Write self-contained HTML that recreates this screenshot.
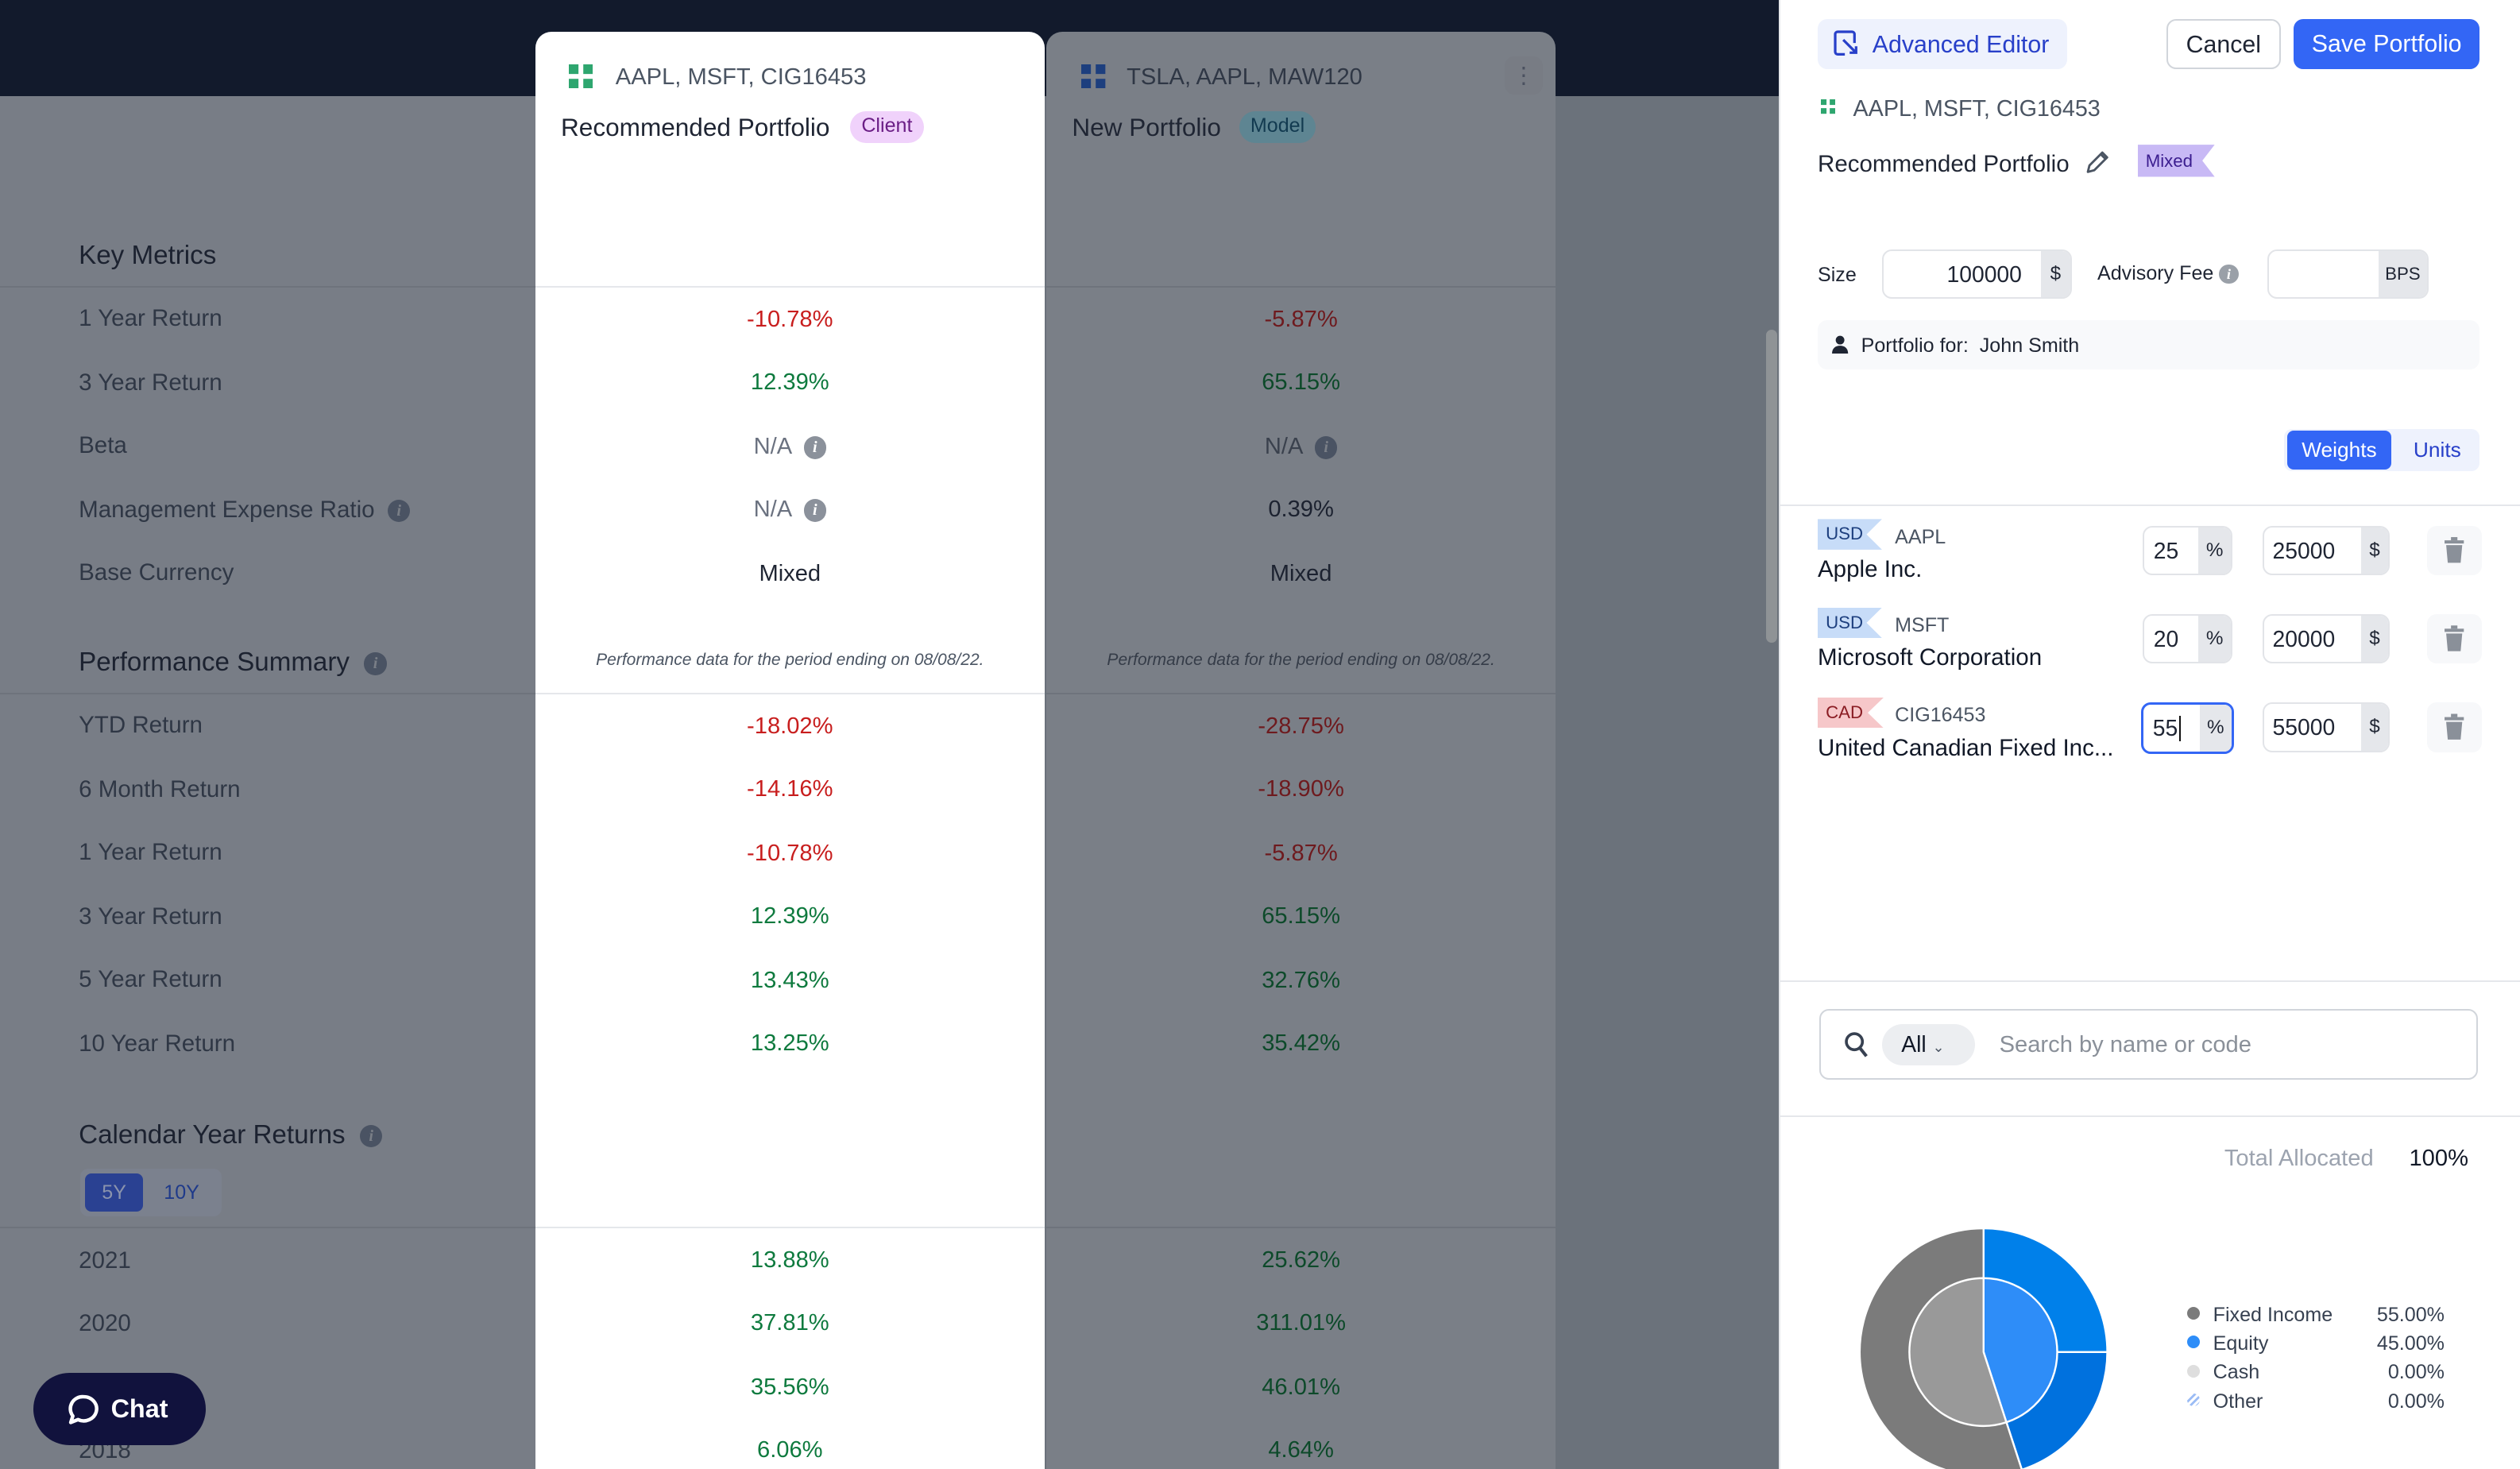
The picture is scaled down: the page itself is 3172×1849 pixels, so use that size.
<!DOCTYPE html>
<html><head><meta charset="utf-8"><style>
*{box-sizing:border-box;margin:0;padding:0}
html,body{width:3172px;height:1848px;overflow:hidden;background:#fff}
#w{position:absolute;left:0;top:0;width:1568px;height:914px;zoom:2.023;font-family:"Liberation Sans",sans-serif;overflow:hidden;background:#6b727b}
.a{position:absolute;white-space:nowrap}
.lab{font-size:14.6px;color:#2f3745}
.h{font-size:16.4px;color:#1c2230}
.c{text-align:center;font-size:14.4px}
.r1{color:#c81e1e}.g1{color:#0e7a3e}
.r2{color:#6e1a1e}.g2{color:#0d4a2a}
.info{display:inline-block;width:14px;height:14px;border-radius:50%;background:#4a5363;color:#7a7f87;font:italic bold 10px/14px "Liberation Serif",serif;text-align:center;vertical-align:middle}
.hl{position:absolute;height:1px}
.inp{position:absolute;border:1px solid #e2e4e8;border-radius:6px;background:#fff;overflow:hidden;font-size:14px;color:#1f2533}
.inp .s{position:absolute;right:0;top:0;bottom:0;background:#e5e7eb;text-align:center;font-size:12px;color:#1f2533}
.tag{position:absolute;height:19px;font-size:11px;padding:3px 0 0 5px}
.trash{position:absolute;width:34px;height:31px;border-radius:6px;background:#f7f8fa}
</style></head><body><div id="w">
<div class="a" style="left:0;top:0;width:1107px;height:60px;background:#121a2c"></div>
<div class="a" style="left:0;top:60px;width:333px;height:854px;background:#787d86"></div>
<div class="a" style="left:651px;top:20px;width:317px;height:894px;background:#7a7f87;border-radius:10px 10px 0 0"></div>
<div class="a" style="left:333px;top:20px;width:317px;height:894px;background:#fff;border-radius:10px 10px 0 0"></div>
<div class="a" style="left:1099px;top:205px;width:7px;height:195px;border-radius:4px;background:#8f9396"></div>

<div class="hl" style="left:0;top:178px;width:333px;background:#6e737c"></div>
<div class="hl" style="left:333px;top:178px;width:317px;background:#e5e7eb"></div>
<div class="hl" style="left:651px;top:178px;width:317px;background:#6e737c"></div>
<div class="hl" style="left:0;top:431px;width:333px;background:#6e737c"></div>
<div class="hl" style="left:333px;top:431px;width:317px;background:#e5e7eb"></div>
<div class="hl" style="left:651px;top:431px;width:317px;background:#6e737c"></div>
<div class="hl" style="left:0;top:763px;width:333px;background:#6e737c"></div>
<div class="hl" style="left:333px;top:763px;width:317px;background:#e5e7eb"></div>
<div class="hl" style="left:651px;top:763px;width:317px;background:#6e737c"></div>

<svg class="a" style="left:354px;top:40px" width="15" height="15"><rect x="0" y="0" width="6" height="6" fill="#2ea66f"/><rect x="9" y="0" width="6" height="6" fill="#2ea66f"/><rect x="0" y="9" width="6" height="6" fill="#2ea66f"/><rect x="9" y="9" width="6" height="6" fill="#2ea66f"/></svg>
<div class="a" style="left:383px;top:40px;font-size:14.4px;color:#4b5563">AAPL, MSFT, CIG16453</div>
<div class="a" style="left:349px;top:70px;font-size:15.6px;color:#1f2533">Recommended Portfolio</div>
<div class="a" style="left:529px;top:69px;height:20px;padding:2px 7px;border-radius:10px;background:#f0d2fb;color:#6b1e86;font-size:12.4px">Client</div>
<svg class="a" style="left:673px;top:40px" width="15" height="15"><rect x="0" y="0" width="6" height="6" fill="#1d3f7e"/><rect x="9" y="0" width="6" height="6" fill="#1d3f7e"/><rect x="0" y="9" width="6" height="6" fill="#1d3f7e"/><rect x="9" y="9" width="6" height="6" fill="#1d3f7e"/></svg>
<div class="a" style="left:701px;top:40px;font-size:14.4px;color:#2f3745">TSLA, AAPL, MAW120</div>
<div class="a" style="left:936px;top:35px;width:24px;height:24px;border-radius:6px;background:#787c84;color:#4b5160;text-align:center;font-size:14px;line-height:24px">&#8942;</div>
<div class="a" style="left:667px;top:70px;font-size:15.6px;color:#1f2533">New Portfolio</div>
<div class="a" style="left:771px;top:69px;height:20px;padding:2px 7px;border-radius:10px;background:#5e8592;color:#123a50;font-size:12.4px">Model</div>

<div class="a h" style="left:49px;top:150px">Key Metrics</div>
<div class="a lab" style="left:49px;top:190px">1 Year Return</div>
<div class="a lab" style="left:49px;top:230px">3 Year Return</div>
<div class="a lab" style="left:49px;top:269px">Beta</div>
<div class="a lab" style="left:49px;top:309px">Management Expense Ratio &nbsp;<span class="info">i</span></div>
<div class="a lab" style="left:49px;top:348px">Base Currency</div>
<div class="a h" style="left:49px;top:403px">Performance Summary &nbsp;<span class="info">i</span></div>
<div class="a lab" style="left:49px;top:443px">YTD Return</div>
<div class="a lab" style="left:49px;top:483px">6 Month Return</div>
<div class="a lab" style="left:49px;top:522px">1 Year Return</div>
<div class="a lab" style="left:49px;top:562px">3 Year Return</div>
<div class="a lab" style="left:49px;top:601px">5 Year Return</div>
<div class="a lab" style="left:49px;top:641px">10 Year Return</div>
<div class="a h" style="left:49px;top:697px">Calendar Year Returns &nbsp;<span class="info">i</span></div>
<div class="a" style="left:50px;top:727px;width:88px;height:30px;border-radius:5px;background:#7b818e"></div>
<div class="a" style="left:53px;top:730px;width:36px;height:24px;border-radius:4px;background:#2a4192;color:#8a93ad;font-size:12.4px;text-align:center;line-height:24px">5Y</div>
<div class="a" style="left:96px;top:730px;width:34px;height:24px;color:#1f3a8a;font-size:12.4px;text-align:center;line-height:24px">10Y</div>
<div class="a lab" style="left:49px;top:776px">2021</div>
<div class="a lab" style="left:49px;top:815px">2020</div>
<div class="a lab" style="left:49px;top:894px">2018</div>

<div class="a" style="left:333px;top:0;width:317px">
<div class="a c r1" style="left:0;width:317px;top:191px">-10.78%</div>
<div class="a c g1" style="left:0;width:317px;top:230px">12.39%</div>
<div class="a c" style="left:0;width:317px;top:270px;color:#6b7280">N/A &nbsp;<span class="info" style="background:#8b919b;color:#fff">i</span></div>
<div class="a c" style="left:0;width:317px;top:309px;color:#6b7280">N/A &nbsp;<span class="info" style="background:#8b919b;color:#fff">i</span></div>
<div class="a c" style="left:0;width:317px;top:349px;color:#1f2533">Mixed</div>
<div class="a c" style="left:0;width:317px;top:405px;font-size:10.4px;font-style:italic;color:#4b5563">Performance data for the period ending on 08/08/22.</div>
<div class="a c r1" style="left:0;width:317px;top:444px">-18.02%</div>
<div class="a c r1" style="left:0;width:317px;top:483px">-14.16%</div>
<div class="a c r1" style="left:0;width:317px;top:523px">-10.78%</div>
<div class="a c g1" style="left:0;width:317px;top:562px">12.39%</div>
<div class="a c g1" style="left:0;width:317px;top:602px">13.43%</div>
<div class="a c g1" style="left:0;width:317px;top:641px">13.25%</div>
<div class="a c g1" style="left:0;width:317px;top:776px">13.88%</div>
<div class="a c g1" style="left:0;width:317px;top:815px">37.81%</div>
<div class="a c g1" style="left:0;width:317px;top:855px">35.56%</div>
<div class="a c g1" style="left:0;width:317px;top:894px">6.06%</div>
</div>
<div class="a" style="left:651px;top:0;width:317px">
<div class="a c r2" style="left:0;width:317px;top:191px">-5.87%</div>
<div class="a c g2" style="left:0;width:317px;top:230px">65.15%</div>
<div class="a c" style="left:0;width:317px;top:270px;color:#3a414d">N/A &nbsp;<span class="info">i</span></div>
<div class="a c" style="left:0;width:317px;top:309px;color:#1c2230">0.39%</div>
<div class="a c" style="left:0;width:317px;top:349px;color:#1c2230">Mixed</div>
<div class="a c" style="left:0;width:317px;top:405px;font-size:10.4px;font-style:italic;color:#353c48">Performance data for the period ending on 08/08/22.</div>
<div class="a c r2" style="left:0;width:317px;top:444px">-28.75%</div>
<div class="a c r2" style="left:0;width:317px;top:483px">-18.90%</div>
<div class="a c r2" style="left:0;width:317px;top:523px">-5.87%</div>
<div class="a c g2" style="left:0;width:317px;top:562px">65.15%</div>
<div class="a c g2" style="left:0;width:317px;top:602px">32.76%</div>
<div class="a c g2" style="left:0;width:317px;top:641px">35.42%</div>
<div class="a c g2" style="left:0;width:317px;top:776px">25.62%</div>
<div class="a c g2" style="left:0;width:317px;top:815px">311.01%</div>
<div class="a c g2" style="left:0;width:317px;top:855px">46.01%</div>
<div class="a c g2" style="left:0;width:317px;top:894px">4.64%</div>
</div>

<div class="a" style="left:21px;top:854px;width:107px;height:45px;border-radius:23px;background:#11123d;color:#fff;font-weight:bold;font-size:16px;line-height:45px;padding-left:48px">Chat</div>
<svg class="a" style="left:41px;top:866px" width="22" height="22" viewBox="0 0 22 22"><path d="M11 3a8 7.5 0 1 1-3.5 14.2L3 19l1.3-4A7.6 7.5 0 0 1 11 3z" fill="none" stroke="#fff" stroke-width="2.2" stroke-linejoin="round"/></svg>

<div class="a" style="left:1107px;top:0;width:461px;height:914px;background:#fff;border-left:1px solid #e5e7eb"></div>
<div class="a" style="left:1131px;top:12px;width:155px;height:31px;border-radius:6px;background:#eef2fd"></div>
<svg class="a" style="left:1141px;top:19px" width="17" height="18" viewBox="0 0 17 18"><path d="M7 15H2.5A1.5 1.5 0 0 1 1 13.5v-11A1.5 1.5 0 0 1 2.5 1h9A1.5 1.5 0 0 1 13 2.5V8" fill="none" stroke="#2840c9" stroke-width="1.6"/><path d="M6 6l8 8M14 10v4h-4" fill="none" stroke="#2840c9" stroke-width="1.6"/></svg>
<div class="a" style="left:1165px;top:20px;font-size:15px;color:#2840c9">Advanced Editor</div>
<div class="a" style="left:1348px;top:12px;width:71px;height:31px;border:1px solid #d1d5db;border-radius:6px;font-size:15px;color:#1f2533;text-align:center;line-height:31px">Cancel</div>
<div class="a" style="left:1427px;top:12px;width:116px;height:31px;border-radius:6px;background:#3366f5;font-size:15px;color:#fff;text-align:center;line-height:32px">Save Portfolio</div>

<svg class="a" style="left:1133px;top:62px" width="9" height="9"><rect x="0" y="0" width="3.5" height="3.5" fill="#2ea66f"/><rect x="5.5" y="0" width="3.5" height="3.5" fill="#2ea66f"/><rect x="0" y="5.5" width="3.5" height="3.5" fill="#2ea66f"/><rect x="5.5" y="5.5" width="3.5" height="3.5" fill="#2ea66f"/></svg>
<div class="a" style="left:1153px;top:60px;font-size:14.2px;color:#4b5563">AAPL, MSFT, CIG16453</div>
<div class="a" style="left:1131px;top:94px;font-size:14.6px;color:#1f2533">Recommended Portfolio</div>
<svg class="a" style="left:1297px;top:93px" width="16" height="16" viewBox="0 0 16 16"><path d="M2 14l1-4 8-8 3 3-8 8z M10 3l3 3" fill="none" stroke="#4b5563" stroke-width="1.4" stroke-linejoin="round"/></svg>
<div class="a" style="left:1330px;top:90px;width:48px;height:20px;background:#c8b9f5;clip-path:polygon(0 0,100% 0,84% 50%,100% 100%,0 100%);font-size:11px;color:#3b1d8f;padding:4px 0 0 5px">Mixed</div>

<div class="a" style="left:1131px;top:164px;font-size:12.4px;color:#1f2533">Size</div>
<div class="inp" style="left:1171px;top:155px;width:118px;height:31px"><div class="a" style="right:30px;top:7px">100000</div><div class="s" style="width:18px;line-height:29px">$</div></div>
<div class="a" style="left:1305px;top:163px;font-size:12.4px;color:#1f2533">Advisory Fee <span class="info" style="width:12px;height:12px;line-height:12px;background:#9aa0a8;color:#fff;font-size:9px">i</span></div>
<div class="inp" style="left:1411px;top:155px;width:100px;height:31px"><div class="s" style="width:30px;line-height:29px;font-size:11px">BPS</div></div>

<div class="a" style="left:1131px;top:199px;width:412px;height:31px;border-radius:6px;background:#f8f9fb"></div>
<svg class="a" style="left:1139px;top:208px" width="12" height="12" viewBox="0 0 12 12"><circle cx="6" cy="3.5" r="2.7" fill="#1f2533"/><path d="M1 12c0-3.5 2.2-5 5-5s5 1.5 5 5z" fill="#1f2533"/></svg>
<div class="a" style="left:1158px;top:208px;font-size:12.4px;color:#1f2533">Portfolio for: &nbsp;John Smith</div>

<div class="a" style="left:1421px;top:267px;width:122px;height:26px;border-radius:5px;background:#eef2fd"></div>
<div class="a" style="left:1423px;top:268px;width:65px;height:24px;border-radius:4px;background:#3366f5;color:#fff;font-size:13px;text-align:center;line-height:24px">Weights</div>
<div class="a" style="left:1494px;top:268px;width:45px;height:24px;color:#2840c9;font-size:13px;text-align:center;line-height:24px">Units</div>
<div class="hl" style="left:1108px;top:314px;width:460px;background:#e5e7eb"></div>

<div class="tag" style="left:1131px;top:323px;width:40px;background:#c7dcf8;color:#1d3f7e;clip-path:polygon(0 0,100% 0,76% 50%,100% 100%,0 100%)">USD</div>
<div class="a" style="left:1179px;top:327px;font-size:12.4px;color:#4b5563">AAPL</div>
<div class="a" style="left:1131px;top:346px;font-size:14.6px;color:#111827">Apple Inc.</div>
<div class="inp" style="left:1333px;top:327px;width:56px;height:31px"><div class="a" style="left:6px;top:7px">25</div><div class="s" style="width:20px;line-height:29px">%</div></div>
<div class="inp" style="left:1408px;top:327px;width:79px;height:31px"><div class="a" style="left:5px;top:7px">25000</div><div class="s" style="width:17px;line-height:29px">$</div></div>
<div class="trash" style="left:1510px;top:327px"></div>

<div class="tag" style="left:1131px;top:378px;width:40px;background:#c7dcf8;color:#1d3f7e;clip-path:polygon(0 0,100% 0,76% 50%,100% 100%,0 100%)">USD</div>
<div class="a" style="left:1179px;top:382px;font-size:12.4px;color:#4b5563">MSFT</div>
<div class="a" style="left:1131px;top:401px;font-size:14.6px;color:#111827">Microsoft Corporation</div>
<div class="inp" style="left:1333px;top:382px;width:56px;height:31px"><div class="a" style="left:6px;top:7px">20</div><div class="s" style="width:20px;line-height:29px">%</div></div>
<div class="inp" style="left:1408px;top:382px;width:79px;height:31px"><div class="a" style="left:5px;top:7px">20000</div><div class="s" style="width:17px;line-height:29px">$</div></div>
<div class="trash" style="left:1510px;top:382px"></div>

<div class="tag" style="left:1131px;top:434px;width:41px;background:#f6c7c9;color:#8a1c23;clip-path:polygon(0 0,100% 0,76% 50%,100% 100%,0 100%)">CAD</div>
<div class="a" style="left:1179px;top:438px;font-size:12.4px;color:#4b5563">CIG16453</div>
<div class="a" style="left:1131px;top:457px;font-size:14.6px;color:#111827">United Canadian Fixed Inc...</div>
<div class="inp" style="left:1332px;top:437px;width:58px;height:32px;border:1.5px solid #3366f5"><div class="a" style="left:6px;top:7px">55<span style="border-left:1px solid #111;margin-left:1px"></span></div><div class="s" style="width:20px;line-height:29px">%</div></div>
<div class="inp" style="left:1408px;top:437px;width:79px;height:31px"><div class="a" style="left:5px;top:7px">55000</div><div class="s" style="width:17px;line-height:29px">$</div></div>
<div class="trash" style="left:1510px;top:437px"></div>

<svg class="a" style="left:1519px;top:333px" width="16" height="130" viewBox="0 0 16 130">
<g fill="#8a9099"><g id="t"><rect x="2" y="3" width="12" height="2"/><rect x="6" y="1" width="4" height="2"/><path d="M3 6h10l-1 11H4z"/></g><use href="#t" y="55"/><use href="#t" y="110"/></g></svg>

<div class="hl" style="left:1108px;top:610px;width:460px;background:#e5e7eb"></div>
<div class="a" style="left:1132px;top:628px;width:410px;height:44px;border:1px solid #d1d5db;border-radius:6px"></div>
<svg class="a" style="left:1147px;top:641px" width="17" height="18" viewBox="0 0 17 18"><circle cx="7" cy="7" r="5" fill="none" stroke="#374151" stroke-width="1.8"/><path d="M10.5 11l4 5" stroke="#374151" stroke-width="2"/></svg>
<div class="a" style="left:1171px;top:637px;width:58px;height:26px;border-radius:13px;background:#eceef1;font-size:14px;color:#111827;padding:5px 0 0 12px">All <span style="font-size:9px;color:#4b5563">&#8964;</span></div>
<div class="a" style="left:1244px;top:642px;font-size:14.4px;color:#8a9099">Search by name or code</div>
<div class="hl" style="left:1108px;top:694px;width:460px;background:#e5e7eb"></div>

<div class="a" style="left:1384px;top:713px;font-size:14.4px;color:#9ca3af">Total Allocated</div>
<div class="a" style="left:1499px;top:713px;font-size:14.4px;color:#111827">100%</div>

<svg class="a" style="left:1156px;top:763px" width="156" height="156" viewBox="-78 -78 156 156">
<g stroke="#fff" stroke-width="1.2">
<path d="M0,0 L0,-77 A77,77 0 0 1 77,0 Z" fill="#0080ea"/>
<path d="M0,0 L77,0 A77,77 0 0 1 23.8,73.2 Z" fill="#0071de"/>
<path d="M0,0 L23.8,73.2 A77,77 0 1 1 0,-77 Z" fill="#7b7b7b"/>
<path d="M0,0 L0,-46 A46,46 0 0 1 14.2,43.7 Z" fill="#2e8df8"/>
<path d="M0,0 L14.2,43.7 A46,46 0 1 1 0,-46 Z" fill="#999"/>
</g></svg>

<div class="a" style="left:1361px;top:813px;width:8px;height:8px;border-radius:50%;background:#7b7b7b"></div>
<div class="a" style="left:1361px;top:831px;width:8px;height:8px;border-radius:50%;background:#2e8df8"></div>
<div class="a" style="left:1361px;top:849px;width:8px;height:8px;border-radius:50%;background:#dedede"></div>
<div class="a" style="left:1361px;top:867px;width:8px;height:8px;border-radius:50%;background:repeating-linear-gradient(135deg,#9bbcf5 0 1.5px,#fff 1.5px 3px)"></div>
<div class="a" style="left:1377px;top:809px;font-size:12.4px;color:#374151;line-height:18px">Fixed Income<br>Equity<br>Cash<br>Other</div>
<div class="a" style="left:1440px;top:809px;width:81px;text-align:right;font-size:12.4px;color:#374151;line-height:18px">55.00%<br>45.00%<br>0.00%<br>0.00%</div>
</div></body></html>
